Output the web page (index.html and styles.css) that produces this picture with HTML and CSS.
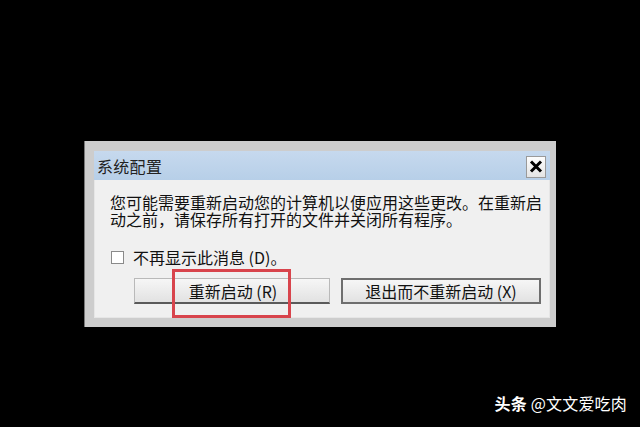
FILE: index.html
```html
<!DOCTYPE html>
<html lang="zh-CN">
<head>
    <meta charset="UTF-8">
    <title>系统配置</title>
    <link rel="stylesheet" href="styles.css">
</head>
<body>
<div class="dialog">
    <div class="title-bar">
        <span class="title">系统配置</span>
        <div class="close-btn">
            <svg width="14" height="13" viewBox="0 0 14 13">
                <path d="M2 1.5 L12 11.5 M12 1.5 L2 11.5" stroke="#000" stroke-width="3" fill="none"/>
            </svg>
        </div>
    </div>
    <div class="dialog-body">
        <p class="message">您可能需要重新启动您的计算机以便应用这些更改。在重新启动之前，请保存所有打开的文件并关闭所有程序。</p>
        <label class="check-row">
            <span class="check-box"></span>
            <span>不再显示此消息 (D)。</span>
        </label>
        <div class="buttons">
            <div class="btn btn-restart">重新启动 (R)</div>
            <div class="btn btn-exit">退出而不重新启动 (X)</div>
        </div>
    </div>
    <div class="highlight"></div>
</div>
<div class="watermark"><b>头条</b> @文文爱吃肉</div>
</body>
</html>
```

FILE: styles.css
```css
body {
    margin: 0;
    background: #000;
    height: 427px;
    overflow: hidden;
    font-family: "Noto Sans CJK SC", "Liberation Sans", sans-serif;
    position: relative;
}

.dialog {
    position: relative;
    box-sizing: border-box;
    width: 471px;
    height: 186px;
    margin: 141px 0 0 85px;
    background: #f0f0f0;
    border-style: solid;
    border-color: #cdcdcd;
    border-width: 10px 6px 9px 9px;
    box-shadow: inset 0 0 0 1px #e6e6e6, -1px 0 0 #777;
}

.title-bar {
    height: 29px;
    display: flex;
    align-items: center;
    justify-content: space-between;
    background: linear-gradient(#c6d9ee, #b7cfe8);
    padding: 0 4px 0 3px;
}

.title {
    font-size: 16px;
    color: #222;
    letter-spacing: 0.3px;
}

.close-btn {
    width: 20px;
    height: 22px;
    margin-top: 2px;
    box-sizing: border-box;
    border: 1px solid #9a9a9a;
    background: linear-gradient(#fdfdfd, #e4e4e4);
    display: flex;
    align-items: center;
    justify-content: center;
}

.dialog-body {
    padding: 14px 4px 0 16px;
    color: #111;
}

.message {
    margin: 0;
    font-size: 16px;
    line-height: 16.5px;
}

.check-row {
    display: flex;
    align-items: center;
    gap: 9px;
    margin-top: 22px;
    font-size: 16px;
    line-height: 16px;
}

.check-box {
    width: 13px;
    height: 13px;
    box-sizing: border-box;
    border: 1px solid #8a8a8a;
    background: #fff;
    margin-left: 1px;
}

.buttons {
    display: flex;
    gap: 11px;
    margin-top: 13px;
    margin-left: 24px;
}

.btn {
    flex-shrink: 0;
    height: 26px;
    box-sizing: border-box;
    display: flex;
    align-items: center;
    justify-content: center;
    font-size: 16px;
    color: #111;
    background: linear-gradient(#f6f6f6, #e2e2e2);
}

.btn-restart {
    width: 196px;
    border: 1px solid #b9b9b9;
    border-bottom: 2px solid #5a5a5a;
    padding-left: 2px;
}

.btn-exit {
    width: 200px;
    border: 2px solid #6e6e6e;
}

.highlight {
    position: absolute;
    left: 78px;
    top: 118px;
    width: 119px;
    height: 49px;
    box-sizing: border-box;
    border: 3px solid #d8444c;
}

.watermark {
    position: absolute;
    right: 13px;
    bottom: 12px;
    color: #fff;
    font-size: 16px;
    letter-spacing: 0.2px;
}

.watermark b {
    font-weight: bold;
}
```
